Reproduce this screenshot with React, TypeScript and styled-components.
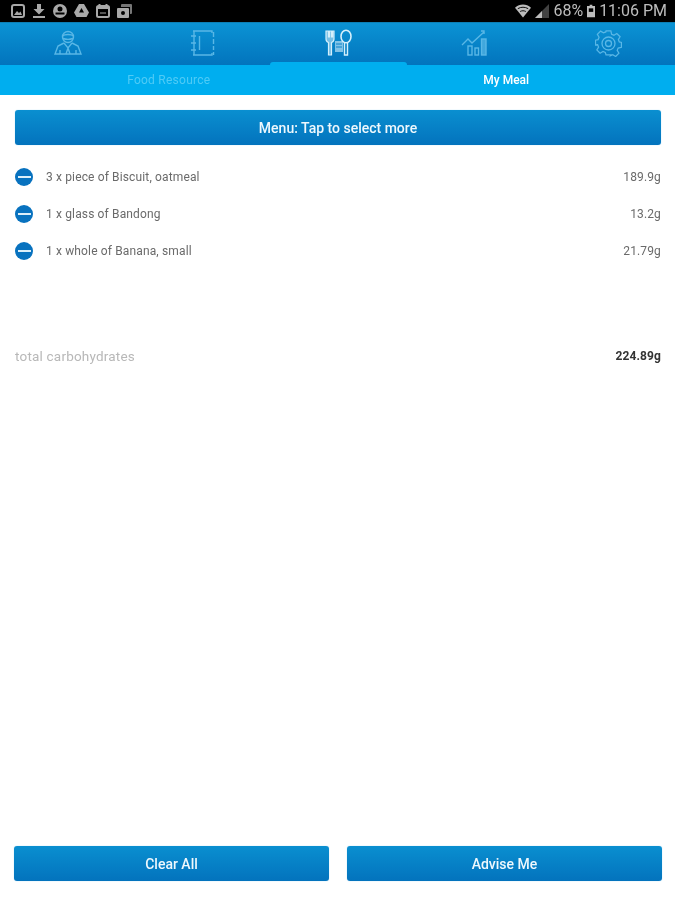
import React from "react";
import styled, { createGlobalStyle } from "styled-components";

const Global = createGlobalStyle`
  html, body { margin: 0; padding: 0; background: #fff; }
  body { font-family: Roboto, "Liberation Sans", sans-serif; }
  #root { width: 675px; height: 900px; }
`;

const Page = styled.div`
  width: 675px;
  height: 900px;
  display: flex;
  flex-direction: column;
  background: #fff;
  overflow: hidden;
  filter: blur(0.4px);
`;

const StatusBar = styled.div`
  height: 22px;
  background: #000;
  display: flex;
  align-items: center;
  justify-content: space-between;
  padding: 0 8px 0 11px;
  flex: none;
`;
const StatusIcons = styled.div`
  display: flex;
  align-items: center;
  gap: 7px;
  color: #a8a8a8;
`;
const StatusRight = styled.div`
  display: flex;
  align-items: center;
  gap: 4px;
  color: #bcbcbc;
`;
const StatusText = styled.span`
  font-size: 16px;
  line-height: 22px;
  white-space: nowrap;
`;

const NavBar = styled.div`
  height: 43px;
  flex: none;
  display: grid;
  grid-template-columns: 135fr 135fr 137fr 134fr 134fr;
  background: linear-gradient(#0b93d4, #0274bd);
  border-top: 1px solid #0c7fb5;
  box-sizing: border-box;
`;
const NavItem = styled.div<{ $active?: boolean }>`
  position: relative;
  display: flex;
  align-items: center;
  justify-content: center;
  padding-bottom: 2px;
  color: ${(p) => (p.$active ? "#d4effb" : "#59b7e6")};
  ${(p) =>
    p.$active &&
    `&::after {
      content: "";
      position: absolute;
      left: 0; right: 0; bottom: 0;
      height: 3px;
      background: #00aeef;
      border-radius: 3px 3px 0 0;
    }`}
`;

const Tabs = styled.div`
  height: 30px;
  flex: none;
  display: grid;
  grid-template-columns: 1fr 1fr;
  background: #00aeef;
`;
const Tab = styled.div<{ $active?: boolean }>`
  position: relative;
  display: flex;
  align-items: center;
  justify-content: center;
  font-size: 12px;
  letter-spacing: ${(p) => (p.$active ? 0 : 0.25)}px;
  font-weight: ${(p) => (p.$active ? 500 : 400)};
  color: ${(p) => (p.$active ? "#fff" : "#4fcbf6")};
  & + &::before {
    content: "";
    position: absolute;
    left: 0;
    top: 5px;
    bottom: 5px;
    width: 1px;
    background: #0f9fe0;
  }
`;

const Content = styled.div`
  flex: 1;
  display: flex;
  flex-direction: column;
  padding: 15px 14px 19px 15px;
`;

const Button = styled.div`
  height: 35px;
  display: flex;
  align-items: center;
  justify-content: center;
  border-radius: 3px;
  background: linear-gradient(#0a8fd0, #0373bd);
  box-shadow: 0 0 1px #7cc6ee;
  color: #eef8fd;
  font-size: 14px;
  font-weight: 500;
`;

const List = styled.div`
  display: flex;
  flex-direction: column;
  margin-top: 13px;
`;
const Row = styled.div`
  height: 37px;
  display: flex;
  align-items: center;
  font-size: 12px;
  letter-spacing: 0.14px;
  color: #6a6a6a;
`;
const Minus = styled.span`
  width: 18px;
  height: 18px;
  border-radius: 50%;
  background: #0872bf;
  flex: none;
  display: flex;
  align-items: center;
  justify-content: center;
  margin-right: 13px;
  &::before {
    content: "";
    width: 13px;
    height: 2px;
    background: #dceffa;
  }
`;
const RowLabel = styled.span`
  flex: 1;
`;

const Total = styled.div`
  margin-top: 77px;
  height: 20px;
  display: flex;
  align-items: center;
  justify-content: space-between;
`;
const TotalLabel = styled.span`
  font-size: 13.5px;
  color: #b8b8b8;
  letter-spacing: 0.2px;
`;
const TotalValue = styled.span`
  font-size: 12px;
  font-weight: 700;
  color: #333;
  letter-spacing: 0.1px;
`;

const Footer = styled.div`
  margin-top: auto;
  margin-left: -1px;
  margin-right: -1px;
  display: grid;
  grid-template-columns: 315px 315px;
  justify-content: space-between;
`;

const Person = () => (
  <svg width="28" height="26" viewBox="0 0 28 26" fill="none" stroke="currentColor" strokeWidth="1.4">
    <circle cx="14" cy="7" r="5.5" />
    <path d="M8.5 6c2-2 9-2 11 0M9 8.5c3 1 7 1 10 0" />
    <path d="M10 13l-6 3-3 8h26l-3-8-6-3" />
    <path d="M10 13l4 5 4-5M14 18l-2 6M14 18l2 6M6 24v-4M22 24v-4" />
  </svg>
);
const Notebook = () => (
  <svg width="26" height="26" viewBox="0 0 26 26" fill="none" stroke="currentColor" strokeWidth="1.4">
    <path d="M3 1h19v2M3 25h19v-2M4 1v24" />
    <path d="M1 6h5M1 13h5M1 20h5" />
    <path d="M9.5 6v14" />
    <path d="M23.5 2v5M23.5 9v5M23.5 16v4M23.5 22v3" />
  </svg>
);
const Utensils = () => (
  <svg width="28" height="28" viewBox="0 0 28 28" fill="none" stroke="currentColor">
    <path d="M1 2v8c0 2 1 3 2.5 3.5V26h3V13.5C8 13 9 12 9 10V2H7.5v6h-1V2h-2v6h-1V2z" fill="currentColor" fillOpacity=".55" strokeWidth="1.2" />
    <ellipse cx="21" cy="7.5" rx="5" ry="6.3" strokeWidth="1.6" />
    <path d="M19.5 14v12h3V14" strokeWidth="1.4" />
    <rect x="10" y="12" width="8" height="11" fill="currentColor" fillOpacity=".6" stroke="none" />
    <path d="M11 15h6M11 18h6" stroke="#0b83c9" strokeWidth="1" />
  </svg>
);
const Chart = () => (
  <svg width="27" height="26" viewBox="0 0 27 26" fill="none" stroke="currentColor" strokeWidth="1.4">
    <path d="M1 15l6-6 4 4L23 2" />
    <path d="M23 4V1h-3" />
    <rect x="7" y="16" width="4" height="9" />
    <rect x="14" y="18" width="3.5" height="7" />
    <rect x="20.5" y="9" width="4.5" height="16" fill="currentColor" fillOpacity=".7" />
  </svg>
);
const Gear = () => (
  <svg width="27" height="27" viewBox="0 0 27 27" fill="none" stroke="currentColor" strokeWidth="1.3">
    <path d="M11 1h5l.8 3.4 2.4 1 3-1.8 3.4 3.4-1.8 3 1 2.4 2.2.6v5l-3.4.8-1 2.4 1.8 3-3.4 3.4-3-1.8-2.4 1L16 26h-5l-.8-2.6-2.4-1-3 1.8-3.4-3.4 1.8-3-1-2.4L0 15.600v-5l2.700-.6 1-2.400-1.800-3 3.400-3.400 3 1.800 2.400-1z" transform="translate(.5 0) scale(.96)" />
    <circle cx="13.500" cy="13.500" r="6.500" />
    <circle cx="13.500" cy="13.500" r="3" />
  </svg>
);

const ImageIcon = () => (
  <svg width="14" height="14" viewBox="0 0 14 14" fill="none">
    <rect x="1" y="1" width="12" height="12" rx="2" stroke="currentColor" strokeWidth="2" />
    <path d="M3 11l3-4 2 2 1.500-1.500L11 11z" fill="currentColor" />
  </svg>
);
const Download = () => (
  <svg width="14" height="14" viewBox="0 0 14 14" fill="currentColor">
    <path d="M5 0h4v5h3.500L7 10.500 1.500 5H5z" />
    <rect x="1" y="12" width="12" height="2" />
  </svg>
);
const Round = () => (
  <svg width="14" height="14" viewBox="0 0 14 14" fill="currentColor">
    <path d="M7 0a7 7 0 1 0 0 14A7 7 0 0 0 7 0zM7 2.500a2.500 2.500 0 1 1 0 5 2.500 2.500 0 0 1 0-5zM2.500 8.500h9v2h-9z" fillRule="evenodd" />
  </svg>
);
const Drive = () => (
  <svg width="15" height="14" viewBox="0 0 15 14" fill="currentColor">
    <path d="M5 0h5l5 8.500-2.500 4.500h-10L0 8.500zM7.500 4L5 8.500h5z" fillRule="evenodd" />
  </svg>
);
const Calendar = () => (
  <svg width="14" height="14" viewBox="0 0 14 14" fill="none">
    <rect x="1" y="2" width="12" height="11" rx="1.500" stroke="currentColor" strokeWidth="2" />
    <path d="M1 4h12M3.500 0v3M10.500 0v3" stroke="currentColor" strokeWidth="2" />
    <path d="M4 8h6v2H4z" fill="currentColor" opacity=".5" />
  </svg>
);
const Stack = () => (
  <svg width="15" height="14" viewBox="0 0 15 14" fill="currentColor">
    <path d="M5 0h9a1 1 0 0 1 1 1v8a1 1 0 0 1-1 1h-1V3H4V1a1 1 0 0 1 1-1z" opacity=".7" />
    <path d="M1 4h10a1 1 0 0 1 1 1v8a1 1 0 0 1-1 1H1a1 1 0 0 1-1-1V5a1 1 0 0 1 1-1zM6 7a2 2 0 1 0 0 4 2 2 0 0 0 0-4z" fillRule="evenodd" />
  </svg>
);
const Wifi = () => (
  <svg width="16" height="16" viewBox="0 0 17 16" fill="currentColor">
    <path d="M8.500 15L0 4.500C5 0 12 0 17 4.500z" />
    <path d="M3 5.500c3.500-2 7.500-2 11 0M5.500 8.500c2-1 4-1 6 0" stroke="#000" strokeWidth="1" fill="none" />
  </svg>
);
const Signal = () => (
  <svg width="14" height="14" viewBox="0 0 14 14" fill="currentColor">
    <path d="M14 0v14H0z" opacity=".35" />
    <path d="M7 7v7H0z" />
  </svg>
);
const Battery = () => (
  <svg width="8" height="14" viewBox="0 0 9 14" fill="none">
    <path d="M3 0h3v1.500h3V14H0V1.500h3z" fill="currentColor" />
    <rect x="2" y="4" width="5" height="4" fill="#000" />
  </svg>
);

const meals: [string, string][] = [
  ["3 x piece of Biscuit, oatmeal", "189.9g"],
  ["1 x glass of Bandong", "13.2g"],
  ["1 x whole of Banana, small", "21.79g"],
];

export default function App() {
  return (
    <Page>
      <Global />
      <StatusBar>
        <StatusIcons>
          <ImageIcon />
          <Download />
          <Round />
          <Drive />
          <Calendar />
          <Stack />
        </StatusIcons>
        <StatusRight>
          <Wifi />
          <Signal />
          <StatusText>68%</StatusText>
          <Battery />
          <StatusText>11:06 PM</StatusText>
        </StatusRight>
      </StatusBar>
      <NavBar>
        <NavItem><Person /></NavItem>
        <NavItem><Notebook /></NavItem>
        <NavItem $active><Utensils /></NavItem>
        <NavItem><Chart /></NavItem>
        <NavItem><Gear /></NavItem>
      </NavBar>
      <Tabs>
        <Tab>Food Resource</Tab>
        <Tab $active>My Meal</Tab>
      </Tabs>
      <Content>
        <Button>Menu: Tap to select more</Button>
        <List>
          {meals.map(([name, amount]) => (
            <Row key={name}>
              <Minus />
              <RowLabel>{name}</RowLabel>
              <span>{amount}</span>
            </Row>
          ))}
        </List>
        <Total>
          <TotalLabel>total carbohydrates</TotalLabel>
          <TotalValue>224.89g</TotalValue>
        </Total>
        <Footer>
          <Button>Clear All</Button>
          <Button>Advise Me</Button>
        </Footer>
      </Content>
    </Page>
  );
}
